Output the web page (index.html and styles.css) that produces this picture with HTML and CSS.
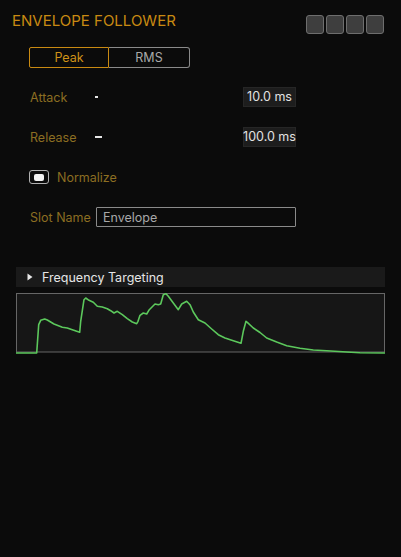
FILE: index.html
```html
<!DOCTYPE html>
<html lang="en">
<head>
  <meta charset="UTF-8" />
  <meta name="viewport" content="width=device-width, initial-scale=1.0" />
  <title>Envelope Follower</title>
  <link rel="stylesheet" href="styles.css">
</head>
<body>
  <div class="panel">
    <div class="panel-header">
      <h1>ENVELOPE FOLLOWER</h1>
      <div class="header-btns">
        <span class="hbtn"></span>
        <span class="hbtn"></span>
        <span class="hbtn"></span>
        <span class="hbtn"></span>
      </div>
    </div>

    <div class="params">
      <div class="mode-switch">
        <button class="mode active">Peak</button>
        <button class="mode">RMS</button>
      </div>

      <div class="param-row first">
        <span class="param-label">Attack</span>
        <div class="slider"><div class="slider-fill" style="width: 3px"></div></div>
        <span class="param-value">10.0 ms</span>
      </div>

      <div class="param-row">
        <span class="param-label">Release</span>
        <div class="slider"><div class="slider-fill" style="width: 7px"></div></div>
        <span class="param-value">100.0 ms</span>
      </div>

      <div class="toggle-row">
        <span class="toggle"><span class="toggle-knob"></span></span>
        <span class="toggle-label">Normalize</span>
      </div>

      <div class="slot-row">
        <span class="param-label">Slot Name</span>
        <input class="slot-input" type="text" value="Envelope">
      </div>
    </div>

    <div class="section-bar">
      <svg class="caret" width="6" height="8" viewBox="0 0 6 8"><path d="M0.5 0.5 L5.5 4 L0.5 7.5 Z" fill="#e8e8e8"/></svg>
      <span>Frequency Targeting</span>
    </div>

    <svg class="env-graph" width="369" height="61" viewBox="0 0 369 61">
      <rect x="0.5" y="0.5" width="368" height="58.5" fill="#161616" stroke="#666" stroke-width="1"/>
      <polyline fill="none" stroke="#5cc85c" stroke-width="1.6" stroke-linejoin="round"
        points="0,60 20.7,60 22.7,31.7 24.7,27.3 28.7,26 31.3,27 38,31 46.3,34.3 51.3,35 56.3,36.7 63.7,39.3 64.7,28.3 68,6.7 69.7,5 73,7.3 77.3,9.3 81.3,13.3 86.3,14 91.3,15.7 94.7,17.7 98,20 101.3,18.3 106.3,21.7 111.3,25.7 116.3,29 120.7,30.7 122,28.3 124,22.3 127.3,20 130.7,21 133.3,16.7 139,11 142.3,11.7 144.7,11 147.3,1.7 150,0.7 152.3,3.3 157.3,10 162.3,16.7 165.7,11 170.7,8.3 174,11.7 177.3,19 182.3,26.7 189,30 195.7,36 202.3,41.7 209,45 217.3,47.7 225,50.3 227.3,38.3 230,28.3 231.3,29.3 237.3,35 244,39.5 250.7,45 260.7,49 270.7,52.7 284,55.3 297.3,57 310.7,57.7 330.7,59 344,59.7 369,60"/>
    </svg>
  </div>
</body>
</html>
```

FILE: styles.css
```css
* {
  margin: 0;
  padding: 0;
  box-sizing: border-box;
  font-family: 'Inter', 'Liberation Sans', sans-serif;
}

body {
  background-color: #0b0b0b;
  width: 401px;
  height: 557px;
  overflow: hidden;
}

.panel-header {
  display: flex;
  justify-content: space-between;
  align-items: flex-start;
  padding: 12px 17px 0 12px;
}

.panel-header h1 {
  font-size: 15px;
  line-height: 18px;
  font-weight: 400;
  color: #c98a12;
}

.header-btns {
  display: flex;
  gap: 2px;
  margin-top: 3px;
}

.hbtn {
  width: 18px;
  height: 19px;
  background: #3e3e3e;
  border: 1.5px solid #6e6e6e;
  border-radius: 3px;
}

.params {
  width: 296px;
  padding-left: 29px;
}

.mode-switch {
  display: flex;
  margin-top: 13px;
}

.mode {
  height: 21px;
  font-size: 12.5px;
  background: transparent;
  cursor: pointer;
}

.mode.active {
  width: 80px;
  color: #cf9218;
  border: 1.5px solid #c98a12;
  border-radius: 2px 0 0 2px;
}

.mode:not(.active) {
  width: 81px;
  color: #a8a8a8;
  border: 1px solid #8a8a8a;
  border-left: none;
  border-radius: 0 3px 3px 0;
}

.param-row {
  display: flex;
  align-items: center;
  height: 20px;
  margin-top: 20px;
}

.param-row.first {
  margin-top: 19px;
}

.param-label {
  width: 66px;
  padding-left: 1px;
  font-size: 12.5px;
  color: #8c6e22;
}

.slider {
  flex: 1;
  height: 2px;
}

.slider-fill {
  height: 2px;
  background: #e6e6e6;
}

.param-value {
  width: 53px;
  height: 20px;
  line-height: 18px;
  text-align: center;
  white-space: nowrap;
  overflow: visible;
  display: flex;
  justify-content: center;
  font-size: 12.5px;
  color: #e2e2e2;
  background: #1d1d1d;
  border: 1px solid #262626;
}

.toggle-row {
  display: flex;
  align-items: center;
  gap: 8px;
  margin-top: 23px;
  height: 14px;
}

.toggle {
  display: flex;
  align-items: center;
  justify-content: center;
  width: 20px;
  height: 14px;
  border: 1.5px solid #b0b0b0;
  border-radius: 3px;
}

.toggle-knob {
  width: 10px;
  height: 7px;
  background: #f2f2f2;
  border-radius: 2px;
}

.toggle-label {
  font-size: 12.5px;
  color: #8c6e22;
}

.slot-row {
  display: flex;
  align-items: center;
  margin-top: 23px;
}

.slot-row .param-label {
  width: 67px;
}

.slot-input {
  width: 200px;
  height: 20px;
  padding-left: 6px;
  font-size: 12.5px;
  color: #a8a8a8;
  background: transparent;
  border: 1.5px solid #8a8a8a;
  border-radius: 1px;
  outline: none;
}

.section-bar {
  display: flex;
  align-items: center;
  gap: 9px;
  margin: 40px 16px 0 16px;
  height: 20px;
  padding-left: 11px;
  background: #1a1a1a;
  font-size: 12.5px;
  color: #e6e6e6;
}

.env-graph {
  display: block;
  margin: 6px 0 0 16px;
}
```
